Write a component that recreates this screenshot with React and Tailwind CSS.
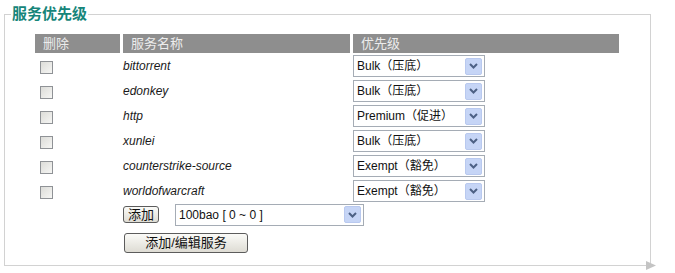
import React from "react";

const services = [
  { name: "bittorrent", level: "Bulk（压底）" },
  { name: "edonkey", level: "Bulk（压底）" },
  { name: "http", level: "Premium（促进）" },
  { name: "xunlei", level: "Bulk（压底）" },
  { name: "counterstrike-source", level: "Exempt（豁免）" },
  { name: "worldofwarcraft", level: "Exempt（豁免）" },
];

const font = "font-['Liberation_Sans','Noto_Sans_CJK_SC',sans-serif]";

function Arrow() {
  return (
    <span className="flex h-[17px] w-[17px] items-center justify-center rounded-[2px] border border-[#b9c9ef] bg-[#c6d5f6]">
      <svg width="9" height="6" viewBox="0 0 9 6">
        <path d="M1 1 L4.5 4.5 L8 1" fill="none" stroke="#4d6185" strokeWidth="2" />
      </svg>
    </span>
  );
}

function Select({ value, className }) {
  return (
    <div className={`flex h-[22px] items-center justify-between border border-[#a5acb5] bg-white pl-[3px] pr-[2px] text-[12px] text-[#111] ${className}`}>
      <span>{value}</span>
      <Arrow />
    </div>
  );
}

function Checkbox() {
  return (
    <span className="block h-[13px] w-[13px] border border-[#8f9296] bg-gradient-to-br from-[#dcdcd8] to-[#f6f6f4]" />
  );
}

export default function App() {
  return (
    <div className={`h-[273px] w-[675px] overflow-hidden bg-white ${font}`}>
      <fieldset className="relative ml-[4px] mt-[6px] h-[260px] w-[647px] border border-[#d2d2d2] pl-[30px] pt-[12px]">
        <legend className="-ml-[24px] px-[1px] text-[15px] font-bold leading-[16px] text-[#16857a]">
          服务优先级
        </legend>

        <div className="flex h-[19px] gap-[3px] text-[13px] leading-[19px] text-[#ececec]">
          <div className="w-[85px] bg-[#8e8e8e] pl-[8px]">删除</div>
          <div className="w-[227px] bg-[#8e8e8e] pl-[8px]">服务名称</div>
          <div className="w-[266px] bg-[#8e8e8e] pl-[8px]">优先级</div>
        </div>

        {services.map((s) => (
          <div key={s.name} className="flex h-[25px] items-center gap-[3px] pt-[1px]">
            <div className="w-[85px] pl-[5px] pt-[2px]">
              <Checkbox />
            </div>
            <div className="w-[227px] text-[12px] italic text-[#1a1a1a]">{s.name}</div>
            <Select value={s.level} className="w-[132px]" />
          </div>
        ))}

        <div className="mt-[1px] flex h-[21px] items-center pl-[88px]">
          <button className="h-[17px] w-[36px] rounded-[3px] border border-[#5c5c5c] bg-gradient-to-b from-[#fbfbf8] to-[#dedcd4] text-[13px] leading-[15px] text-[#111]">
            添加
          </button>
          <Select value="100bao [ 0 ~ 0 ]" className="ml-[16px] w-[189px]" />
        </div>

        <div className="mt-[5px] pl-[89px]">
          <button className="h-[20px] w-[124px] rounded-[3px] border border-[#5c5c5c] bg-gradient-to-b from-[#fbfbf8] to-[#dedcd4] text-[13px] leading-[18px] text-[#111]">
            添加/编辑服务
          </button>
        </div>

        <svg className="absolute bottom-[-5px] right-[-6px]" width="10" height="9" viewBox="0 0 10 9">
          <path d="M0 0 L10 4.5 L0 9 Z" fill="#c4c4c4" />
        </svg>
      </fieldset>
    </div>
  );
}
